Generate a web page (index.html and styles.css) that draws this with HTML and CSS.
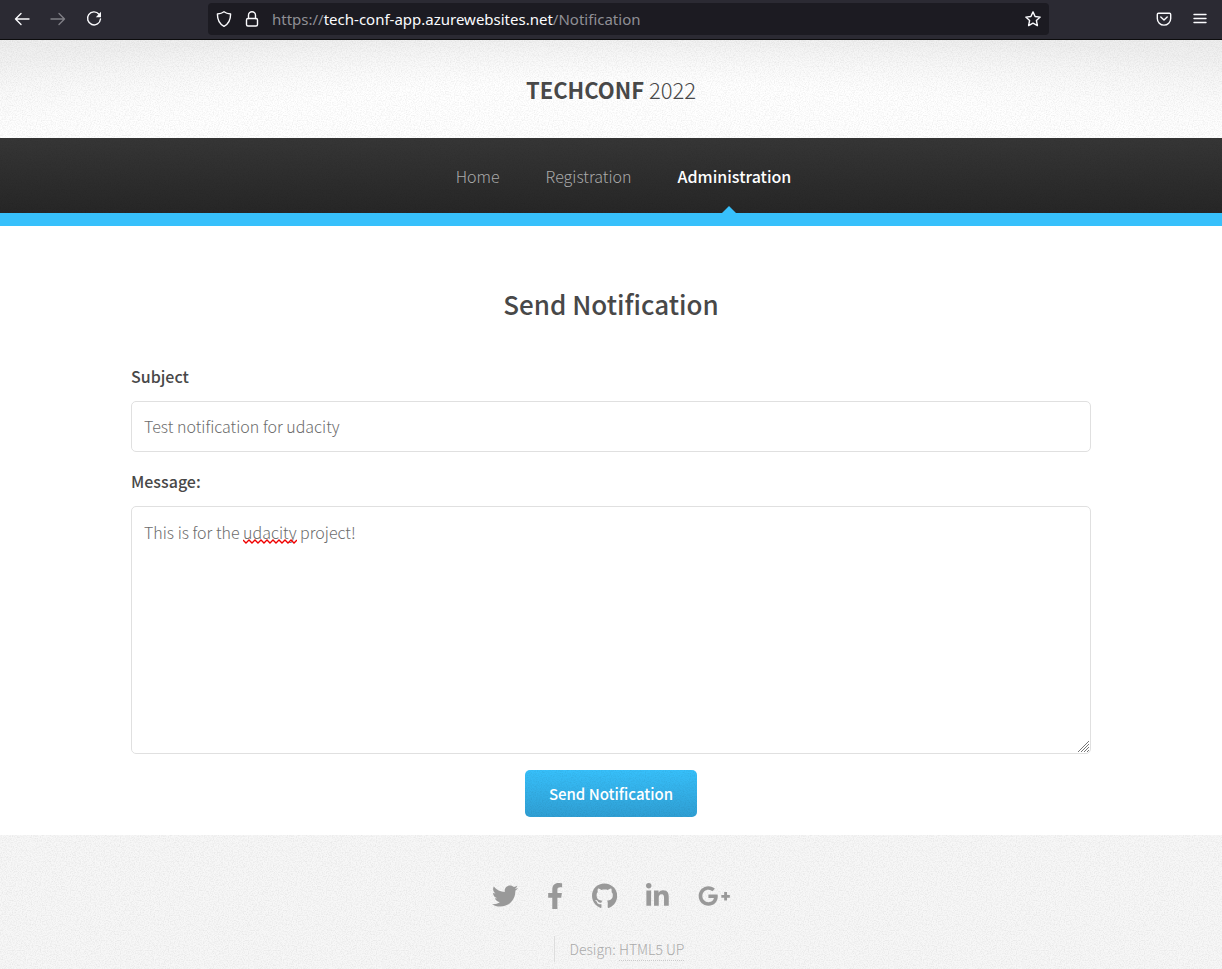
FILE: index.html
```html
<!DOCTYPE html>
<html lang="en">
<head>
<meta charset="utf-8">
<title>TechConf 2022 - Send Notification</title>
<link rel="stylesheet" href="styles.css">
</head>
<body>
<div class="toolbar">
  <div class="toolbar-side">
    <button class="tool" type="button" aria-label="Back"><svg width="16" height="16" viewBox="0 0 16 16"><path d="M15 8H1.500M7 2.500 1.500 8 7 13.500"/></svg></button>
    <button class="tool tool-off" type="button" aria-label="Forward"><svg width="16" height="16" viewBox="0 0 16 16"><path d="M1 8h13.500M9 2.500 14.500 8 9 13.500"/></svg></button>
    <button class="tool" type="button" aria-label="Reload"><svg width="16" height="16" viewBox="0 0 16 16"><path d="M13 3.200A6.500 6.500 0 1 0 14.500 8"/><path class="solid" d="M15 .8v5.400H9.800z"/></svg></button>
  </div>
  <div class="address">
    <svg width="16" height="16" viewBox="0 0 16 16"><path d="M8 .8C6.500 2 4 2.800 1.400 3c0 5.500 1.600 9.800 6.600 12.300C13 12.800 14.600 8.500 14.600 3 12 2.800 9.500 2 8 .8z"/></svg>
    <svg width="16" height="16" viewBox="0 0 16 16"><path d="M4.500 7.500V4.200a3.500 3.500 0 0 1 7 0v3.300"/><rect x="2.500" y="7.500" width="11" height="7.500" rx="1.500"/></svg>
    <span class="url">https://<b>tech-conf-app.azurewebsites.net</b>/Notification</span>
    <svg width="16" height="16" viewBox="0 0 16 16"><path d="m8 .9 2.100 4.600 5.100.6-3.800 3.400 1 5.100L8 12.100l-4.400 2.500 1-5.100L.8 6.100l5.100-.6z"/></svg>
  </div>
  <div class="toolbar-side toolbar-end">
    <button class="tool" type="button" aria-label="Save to Pocket"><svg width="16" height="16" viewBox="0 0 16 16"><path d="M2.500 2.200h11c.7 0 1.200.5 1.200 1.200v4a6.700 6.700 0 0 1-13.400 0v-4c0-.7.5-1.200 1.200-1.200zM4.800 6 8 9l3.200-3"/></svg></button>
    <button class="tool" type="button" aria-label="Menu"><svg width="16" height="16" viewBox="0 0 16 16"><path d="M2 3.500h12M2 7.500h12M2 11.500h12"/></svg></button>
  </div>
</div>

<header class="header">
  <h1 class="logo"><strong>TECHCONF</strong> 2022</h1>
</header>

<nav class="nav">
  <a href="#home">Home</a>
  <a href="#registration">Registration</a>
  <a class="current" href="#administration">Administration</a>
</nav>

<main class="main">
  <h2 class="title">Send Notification</h2>
  <form class="form">
    <label for="subject">Subject</label>
    <input id="subject" type="text" value="Test notification for udacity">
    <label for="message">Message:</label>
    <div class="message">
      <textarea id="message" spellcheck="false">This is for the udacity project!</textarea>
      <svg class="squiggle" width="54" height="5" viewBox="0 0 54 5"><path d="M0 1 3 4 6 1 9 4 12 1 15 4 18 1 21 4 24 1 27 4 30 1 33 4 36 1 39 4 42 1 45 4 48 1 51 4 54 1"/></svg>
    </div>
    <button class="send" type="submit">Send Notification</button>
  </form>
</main>

<footer class="footer">
  <div class="social">
    <a href="#twitter" aria-label="Twitter"><svg height="26" viewBox="0 0 512 512"><path d="M459.370 151.716c.325 4.548.325 9.097.325 13.645 0 138.720-105.583 298.558-298.558 298.558-59.452 0-114.680-17.219-161.137-47.106 8.447.974 16.568 1.299 25.340 1.299 49.055 0 94.213-16.568 130.274-44.832-46.132-.975-84.792-31.188-98.112-72.772 6.498.974 12.995 1.624 19.818 1.624 9.421 0 18.843-1.300 27.614-3.573-48.081-9.747-84.143-51.980-84.143-102.985v-1.299c13.969 7.797 30.214 12.670 47.431 13.319-28.264-18.843-46.781-51.005-46.781-87.391 0-19.492 5.197-37.360 14.294-52.954 51.655 63.675 129.300 105.258 216.365 109.807-1.624-7.797-2.599-15.918-2.599-24.040 0-57.828 46.782-104.934 104.934-104.934 30.213 0 57.502 12.670 76.670 33.137 23.715-4.548 46.456-13.320 66.599-25.340-7.798 24.366-24.366 44.833-46.132 57.827 21.117-2.273 41.584-8.122 60.426-16.243-14.292 20.791-32.161 39.308-52.628 54.253z"/></svg></a>
    <a href="#facebook" aria-label="Facebook"><svg height="26" viewBox="0 0 320 512"><path d="M279.140 288l14.220-92.660h-88.910v-60.130c0-25.350 12.420-50.060 52.240-50.060h40.420V6.260S260.430 0 225.360 0c-73.220 0-121.080 44.380-121.080 124.720v70.620H22.890V288h81.390v224h100.170V288z"/></svg></a>
    <a href="#github" aria-label="GitHub"><svg height="26" viewBox="0 0 496 512"><path d="M244.800 8C106.100 8 0 113.300 0 252c0 110.900 69.800 205.800 169.500 239.200 12.800 2.300 17.300-5.600 17.300-12.100 0-6.200-.3-40.400-.3-61.400 0 0-70 15-84.700-29.800 0 0-11.400-29.100-27.800-36.600 0 0-22.900-15.700 1.600-15.400 0 0 24.900 2 38.600 25.800 21.900 38.600 58.600 27.500 72.900 20.900 2.300-16 8.800-27.100 16-33.700-55.900-6.200-112.300-14.300-112.300-110.500 0-27.500 7.600-41.300 23.600-58.900-2.600-6.500-11.100-33.300 2.600-67.900 20.900-6.500 69 27 69 27 20-5.600 41.500-8.500 62.800-8.500s42.800 2.900 62.800 8.500c0 0 48.100-33.600 69-27 13.700 34.700 5.200 61.400 2.600 67.900 16 17.700 25.800 31.500 25.800 58.900 0 96.500-58.900 104.200-114.800 110.500 9.200 7.900 17 22.900 17 46.400 0 33.700-.3 75.400-.3 83.600 0 6.500 4.600 14.400 17.300 12.100C428.200 457.800 496 362.900 496 252 496 113.300 383.500 8 244.800 8z"/></svg></a>
    <a href="#linkedin" aria-label="LinkedIn"><svg height="26" viewBox="0 0 448 512"><path d="M100.300 448H7.400V148.900h92.900zM53.800 108.100C24.100 108.100 0 83.500 0 53.800a53.800 53.800 0 0 1 107.600 0c0 29.700-24.100 54.300-53.800 54.300zM447.900 448h-92.700V302.400c0-34.700-.7-79.200-48.300-79.200-48.300 0-55.700 37.700-55.700 76.700V448h-92.800V148.900h89.100v40.800h1.300c12.400-23.500 42.700-48.300 87.900-48.300 94 0 111.300 61.900 111.300 142.300V448z"/></svg></a>
    <a href="#google-plus" aria-label="Google Plus"><svg height="26" viewBox="0 0 640 512"><path d="M386.061 228.496c1.834 9.692 3.143 19.384 3.143 31.956C389.204 370.205 315.599 448 204.800 448c-106.084 0-192-85.915-192-192s85.916-192 192-192c51.864 0 95.083 18.859 128.611 50.292l-52.126 50.030c-14.145-13.621-39.028-29.599-76.485-29.599-65.484 0-118.920 54.221-118.920 121.277 0 67.056 53.436 121.277 118.920 121.277 75.961 0 104.513-54.745 108.965-82.773H204.800v-66.009h181.261zm185.406 6.437V179.200h-56.001v55.733h-55.733v56.001h55.733v55.733h56.001v-55.733H627.200v-56.001h-55.733z"/></svg></a>
  </div>
  <div class="credits">
    <p class="credit">Design: <a href="#html5up">HTML5 UP</a></p>
  </div>
</footer>
</body>
</html>
```
FILE: styles.css
```css
:root {
  --grain: url("data:image/svg+xml,%3Csvg xmlns='http://www.w3.org/2000/svg' width='128' height='128'%3E%3Cfilter id='n' x='0' y='0' width='100%25' height='100%25'%3E%3CfeTurbulence type='fractalNoise' baseFrequency='.8' numOctaves='2' stitchTiles='stitch'/%3E%3CfeColorMatrix values='0 0 0 0 0 0 0 0 0 0 0 0 0 0 0 .14 0 0 0 -.055'/%3E%3C/filter%3E%3Crect width='128' height='128' filter='url(%23n)'/%3E%3C/svg%3E");
}

* {
  box-sizing: border-box;
}

body {
  margin: 0;
  min-height: 100vh;
  display: flex;
  flex-direction: column;
  background: #fff;
  color: #6c6c6c;
  font: 300 16px/28px "Noto Sans CJK SC", "Noto Sans", sans-serif;
}

svg {
  display: block;
}

/* Browser toolbar */

.toolbar {
  display: flex;
  align-items: center;
  height: 40px;
  padding-bottom: 2px;
  background: #2b2a33;
  border-bottom: 1px solid #0c0c0d;
}

.toolbar svg {
  flex: none;
  fill: none;
  stroke: #fbfbfe;
  stroke-width: 1.4;
  stroke-linejoin: round;
  stroke-linecap: round;
}

.toolbar .solid {
  fill: #fbfbfe;
  stroke: none;
}

.toolbar-side {
  flex: 196 1 0;
  display: flex;
  gap: 4px;
  padding: 0 6px;
}

.toolbar-end {
  flex-grow: 161;
  justify-content: flex-end;
}

.tool {
  padding: 8px;
  border: 0;
  background: none;
}

.tool-off {
  opacity: 0.4;
}

.address {
  flex: 825 1 0;
  display: flex;
  align-items: center;
  gap: 12px;
  height: 32px;
  padding: 0 8px;
  border-radius: 4px;
  background: #1c1b22;
}

.url {
  flex: 1;
  color: #8f8f95;
  font: 400 15px/20px "Noto Sans", sans-serif;
}

.url b {
  color: #fbfbfe;
  font-weight: 400;
}

/* Site header */

.header {
  padding: 31px 0;
  text-align: center;
  background: var(--grain), radial-gradient(ellipse 70% 110% at 50% 100%, #fff 50%, transparent), linear-gradient(#eee, #fff);
}

.logo {
  margin: 0;
  color: #484848;
  font-size: 22px;
  font-weight: 300;
  line-height: 36px;
}

.logo strong {
  font-weight: 700;
}

.nav {
  display: flex;
  justify-content: center;
  gap: 46px;
  padding: 0 0 0 25px;
  border-bottom: 13px solid #37c0fb;
  background: var(--grain), linear-gradient(#363636, #262626);
}

.nav a {
  position: relative;
  padding-top: 2px;
  color: #aaa;
  line-height: 73px;
  text-decoration: none;
}

.nav .current {
  color: #fff;
  font-weight: 500;
}

.nav .current::after {
  content: "";
  position: absolute;
  left: calc(50% - 12px);
  bottom: 0;
  border: solid transparent;
  border-width: 0 7px 7px;
  border-bottom-color: #37c0fb;
}

/* Form */

.main {
  width: 100%;
  max-width: 992px;
  margin: 0 auto;
  padding: 60px 16px 18px;
}

.title {
  margin: 0 0 40px;
  color: #484848;
  font-size: 26px;
  font-weight: 500;
  line-height: 36px;
  text-align: center;
}

.form {
  display: flex;
  flex-direction: column;
}

.form label {
  margin-bottom: 11px;
  color: #484848;
  font-weight: 500;
}

.form input,
.form textarea {
  display: block;
  width: 100%;
  padding: 9px 12px 11px;
  border: 1px solid #e0e0e0;
  border-radius: 5px;
  outline: 0;
  background: #fff;
  color: inherit;
  font: inherit;
}

.form input {
  height: 51px;
  margin-bottom: 15px;
}

.form textarea {
  height: 248px;
  padding-top: 11px;
  resize: vertical;
}

.form textarea::-webkit-resizer {
  background: url("data:image/svg+xml,%3Csvg xmlns='http://www.w3.org/2000/svg' viewBox='0 0 15 15'%3E%3Cpath d='M3 14 14 3M6 14l8-8M9 14l5-5M12 14l2-2' stroke='%23777' fill='none'/%3E%3C/svg%3E") no-repeat right bottom / 15px 15px;
}

.message {
  position: relative;
  margin-bottom: 16px;
}

.squiggle {
  position: absolute;
  left: 112px;
  top: 33px;
  fill: none;
  stroke: #f00000;
  stroke-width: 1.4;
}

.send {
  align-self: center;
  padding: 0 24px;
  border: 0;
  border-radius: 5px;
  background: var(--grain), linear-gradient(#37c0fb, #2f9fd4);
  color: #fff;
  font: inherit;
  font-size: 15px;
  font-weight: 500;
  line-height: 47px;
}

/* Footer */

.footer {
  flex: 1;
  padding: 48px 0 6px;
  background: var(--grain), #f7f7f7;
}

.social {
  display: flex;
  justify-content: center;
  gap: 29px;
  margin-bottom: 27px;
}

.social svg {
  fill: #999;
}

.credits {
  display: flex;
  justify-content: center;
  padding-left: 16px;
}

.credit {
  margin: 0;
  padding-left: 15px;
  border-left: 1px solid #ddd;
  color: #aaa;
  font-size: 14px;
  line-height: 26px;
}

.credit a {
  display: inline-block;
  border-bottom: 1px dotted #ccc;
  color: inherit;
  line-height: 22px;
  text-decoration: none;
}
```
